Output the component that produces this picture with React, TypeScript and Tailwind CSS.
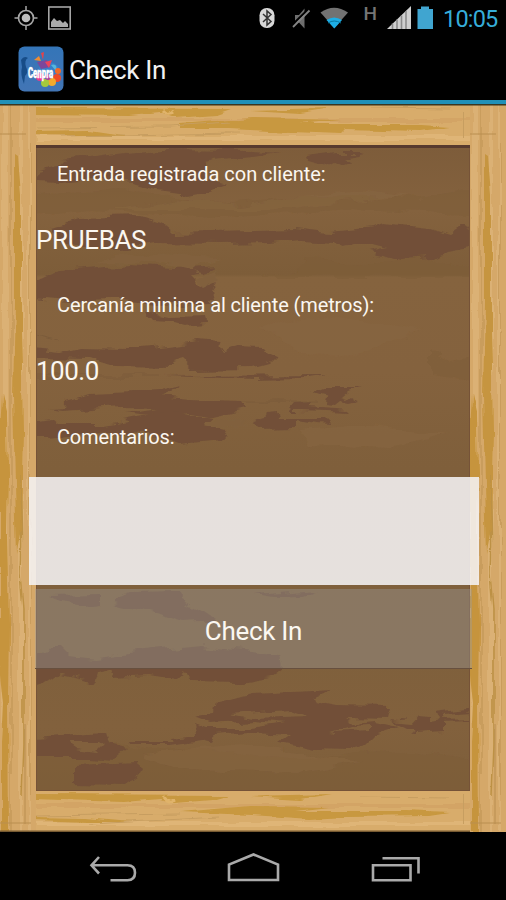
const GRAIN = [
  "M57 166L62 160 95 156 125 152 160 149 253 150 280 152 250 156 215 160 205 166 206 178 226 183 208 190 185 194 158 190 135 183 90 178 60 181 36 180 40 170Z",
  "M308 157L335 153 362 153 344 157 353 162 345 165 335 161 325 166 310 162Z",
  "M50 227L80 218 140 216 160 222 172 232 253 230 295 229 330 233 375 228 385 224 400 226 430 229 450 235 462 227 474 232 474 246 445 251 432 258 400 260 385 255 370 252 390 248 370 243 340 248 335 242 300 240 270 243 220 244 155 243 120 249 80 248 60 242Z",
  "M32 284L60 271 130 265 175 268 212 264 205 272 190 276 200 286 218 281 210 291 212 301 160 304 110 299 70 301 32 298Z",
  "M145 312L170 317 205 316 206 323 186 325 170 321 152 320Z",
  "M32 350L60 353 80 348 130 349 170 345 195 341 218 343 224 352 240 346 262 347 267 353 277 357 270 364 255 368 190 369 180 360 170 363 173 367 115 366 90 358 32 357Z",
  "M48 409L64 408 65 400 90 393 160 390 182 385 172 392 160 397 190 400 240 402 245 410 215 417 190 413 150 416 125 413 158 408 120 407 62 411Z",
  "M32 420L50 417 58 424 105 424 155 415 175 412 215 418 205 425 228 430 220 440 180 444 165 435 110 432 50 438 32 438Z",
  "M165 376L328 375 310 378 253 379Z",
  "M312 392L325 387 363 387 348 391 340 398 346 400 351 396 359 401 350 403 340 401 335 405 325 404 326 396Z",
  "M287 410L293 403 309 402 307 406 350 409 353 412 300 410Z",
  "M253 422L265 419 267 412 278 411 279 417 325 417 332 424 316 423 296 420 296 427 258 428Z",
  "M50 595L100 594 100 603 85 605 60 601Z",
  "M115 600L132 593 180 592 185 602 200 610 215 620 185 622 160 614 115 603Z",
  "M253 594L317 589 300 596 270 597Z",
  "M32 655L60 645 70 655 100 658 150 650 200 645 225 648 280 655 282 668 270 677 240 682 190 681 185 672 176 680 150 676 113 678 110 671 97 675 95 683 60 675 42 687 32 690Z",
  "M32 738L105 733 108 745 128 749 115 760 75 757 32 757Z",
  "M75 765L140 762 142 773 128 783 75 782Z",
  "M130 741L175 741 173 736 195 733 193 723 206 728 253 728 285 723 253 720 213 723 195 716 213 713 215 703 230 700 253 694 295 692 330 690 315 697 317 703 335 707 392 708 389 719 345 718 355 724 375 722 398 727 385 731 375 735 365 745 348 750 315 749 280 742 290 735 250 733 215 736 212 742 200 739 170 744 131 744Z",
  "M391 721L410 723 416 716 428 717 428 722 445 720 445 731 412 733 398 726Z",
  "M436 713L474 708 474 712 445 714 442 720 474 719 474 722 440 723Z",
];

const STREAKS = [
  "M30 108L230 109 215 114 175 117 160 112 130 115 30 114Z",
  "M180 124L253 118 340 120 300 124 405 124 450 127 420 131 345 129 340 134 290 132 230 129 180 129Z",
  "M30 131L90 130 130 136 30 135Z",
  "M30 794L230 795 212 800 175 803 160 799 125 802 30 799Z",
  "M180 812L250 806 330 807 295 811 405 811 450 813 430 816 345 817 310 819 253 815Z",
  "M30 817L85 818 130 822 90 822 30 820Z",
  "M250 110L330 108 300 113Z",
  "M250 797L330 795 300 800Z",
];

function Wood() {
  return (
    <svg viewBox="0 104 506 728" className="col-start-1 row-start-1 h-[728px] w-[506px]" aria-hidden="true">
      <defs>
        <linearGradient id="board" x1="0" y1="0" x2="0" y2="1">
          <stop offset="0" stopColor="#7d5c3a" />
          <stop offset="0.1" stopColor="#84623e" />
          <stop offset="0.2" stopColor="#7d5d39" />
          <stop offset="0.205" stopColor="#85633e" />
          <stop offset="0.35" stopColor="#84623e" />
          <stop offset="0.5" stopColor="#7f5f3b" />
          <stop offset="0.8" stopColor="#7f603c" />
          <stop offset="0.9" stopColor="#82613d" />
          <stop offset="1" stopColor="#7d5e3a" />
        </linearGradient>
        <clipPath id="inner">
          <rect x="36" y="145" width="434" height="646" />
        </clipPath>
        <clipPath id="rails">
          <path d="M36 104H470V145H36ZM36 791H470V832H36Z" />
        </clipPath>
        <clipPath id="upright">
          <rect width="36" height="728" />
        </clipPath>
        <filter id="ragged" x="0" y="104" width="506" height="728" filterUnits="userSpaceOnUse">
          <feTurbulence type="fractalNoise" baseFrequency="0.03 0.09" numOctaves="3" seed="4" result="n" />
          <feDisplacementMap in="SourceGraphic" in2="n" scale="13" xChannelSelector="R" yChannelSelector="G" />
        </filter>
        <filter id="railEdge" x="0" y="104" width="506" height="728" filterUnits="userSpaceOnUse">
          <feTurbulence type="fractalNoise" baseFrequency="0.02 0.1" numOctaves="3" seed="7" result="n" />
          <feDisplacementMap in="SourceGraphic" in2="n" scale="7" xChannelSelector="R" yChannelSelector="G" />
        </filter>
        <filter id="postEdge" x="-5" y="0" width="46" height="728" filterUnits="userSpaceOnUse">
          <feTurbulence type="fractalNoise" baseFrequency="0.12 0.02" numOctaves="3" seed="9" result="n" />
          <feDisplacementMap in="SourceGraphic" in2="n" scale="7" xChannelSelector="R" yChannelSelector="G" />
        </filter>
        <g id="post" clipPath="url(#upright)">
          <rect width="36" height="728" fill="#d5a869" />
          <g filter="url(#postEdge)">
            <path d="M2 0H8V728H2ZM19 0H23V728H19ZM28 0H30V728H28Z" fill="#dbb175" />
            <path d="M10 0H12V728H10ZM30 40H31V690H30Z" fill="#c99d5d" />
            <path d="M15 50L18 52 21 90 21 230 22 260 23 330 21 430 17 450 15 380 13 290 15 200Z" fill="#c6953f" />
            <path d="M2 290L7 312 8 370 7 430 9 520 8 600 9 728H2L2 640 4 600 0 560V330Z" fill="#c6943d" />
            <path d="M19 370Q23 430 21 470L24 505V640L22 690" fill="none" stroke="#bd9145" strokeWidth="1.5" />
          </g>
          <path d="M0 30H26M25 620V720M0 719H31" fill="none" stroke="#b98e50" />
        </g>
      </defs>
      <rect y="104" width="506" height="728" fill="#d8ac6b" />
      <g clipPath="url(#rails)">
        <g filter="url(#railEdge)">
          <path d="M36 118H470V122H36ZM36 804H470V808H36Z" fill="#d3a465" />
          <path d="M36 136H470V140H36ZM36 822H470V826H36Z" fill="#dfb577" />
          {STREAKS.map((d) => (
            <path key={d} d={d} fill="#c8983f" />
          ))}
          <path d="M163 110Q168 116 174 111M163 796Q168 804 175 799" stroke="#e0b36a" strokeWidth="3" fill="none" />
          <path d="M36 128L170 127 230 123M60 136L240 133M36 816L180 814M90 824L220 817M370 108L450 109M360 796L450 797" stroke="#c79e60" fill="none" />
        </g>
      </g>
      <path d="M463.5 112V138M463.5 794V824" stroke="#c79e60" />
      <use href="#post" y="104" />
      <use href="#post" x="470" y="104" />
      <rect x="36" y="145" width="434" height="646" fill="url(#board)" />
      <g clipPath="url(#inner)">
        <g filter="url(#ragged)">
          <path d="M30 195L120 190 220 203 310 196 420 198 474 190V214L350 209 220 218 90 211 30 216ZM295 272L305 260 370 264 420 258 474 268V277H253ZM430 350L450 362 474 358V380L430 375ZM30 740L190 750 300 760 400 750 474 760V796H30Z" fill="#7b5b38" opacity=".5" />
          <path d="M110 210L180 199 240 205 300 196 360 190 410 197 330 203 270 210ZM260 325L330 318 420 330 360 353 310 358ZM300 430L360 425 450 435 390 448 310 445ZM140 755L240 745 360 762 300 773 180 770Z" fill="#886641" opacity=".5" />
          {GRAIN.map((d) => (
            <path key={d} d={d} fill="#725038" />
          ))}
          <path d="M160 254L220 257 200 262 190 270 205 273 215 268 220 279 204 287 196 281 205 276 188 269 155 263 90 262 115 257ZM73 741L98 741 105 747 99 753 76 750ZM205 421L235 420 248 425 225 428 206 425ZM355 726L370 725 370 731 330 733ZM230 714L290 710 308 716 250 718Z" fill="#81613e" />
          <path d="M36 335L60 341M36 376H160M240 402H315" stroke="#745638" opacity=".6" fill="none" />
        </g>
      </g>
      <rect x="36" y="145" width="434" height="3" fill="#573a2e" />
      <path d="M36.5 148V791M36 790.5H470M469.5 148V791" stroke="#765338" fill="none" />
      <rect y="104" width="506" height="1.5" fill="#3b3620" />
      <rect y="830.5" width="470" height="1.5" fill="#765a32" />
    </svg>
  );
}

function Logo() {
  return (
    <svg viewBox="0 0 46 46" className="mt-px h-[46px] w-[46px] overflow-visible" role="img">
      <defs>
        <linearGradient id="tile" x1="0" y1="0" x2="0" y2="1">
          <stop stopColor="#3475b8" />
          <stop offset="1" stopColor="#4275b5" />
        </linearGradient>
      </defs>
      <rect x=".5" y=".5" width="45" height="45" rx="6" fill="url(#tile)" />
      <path d="M3 14Q6 9 10 12Q6 14 8 21Q11 26 7 30L6 38Q2 28 4 21Z" fill="#174d88" />
      <ellipse cx="31" cy="26" rx="11" ry="10" fill="#367fca" />
      <path d="M16 14L21 10 23 15Z" fill="#ef8c32" />
      <path d="M23 7L26 6 25 14Z" fill="#e64348" />
      <path d="M19 16L29 14 32 21 23 23Z" fill="#7c479b" />
      <path d="M27 16L34 14 31 22Z" fill="#ec455c" />
      <path d="M33 19Q40 17 38 25Z" fill="#55b8db" />
      <circle cx="40" cy="25" r="3" fill="#f16a28" />
      <circle cx="39" cy="32" r="4" fill="#ef4a26" />
      <circle cx="34" cy="36" r="4" fill="#f4a92a" />
      <circle cx="27" cy="37" r="4" fill="#a4c93d" />
      <circle cx="22" cy="31" r="4" fill="#e83c8b" />
      <circle cx="30" cy="31" r="3" fill="#ac3f98" />
      <text transform="translate(10 31.5) scale(.78 1.5)" fontFamily="Roboto, sans-serif" fontSize="10" fontWeight="900" fill="#fff" stroke="#fff" strokeWidth=".3">
        Cenpra
      </text>
    </svg>
  );
}

function StatusBar() {
  return (
    <header className="flex h-9 items-center justify-between">
      <svg viewBox="0 0 80 36" className="h-9 w-20" fill="none" stroke="#a5a5a5">
        <circle cx="26" cy="18" r="7.5" strokeWidth="1.7" />
        <circle cx="26" cy="18" r="4.3" fill="#bdbdbd" stroke="none" />
        <path d="M26 6V11M26 25V30M14.5 18H19M33 18H37.5" strokeWidth="1.5" />
        <rect x="48.8" y="7" width="21.4" height="22" strokeWidth="1.6" />
        <path d="M51 27V22L54 18 57 21 60 20 63 23 65 21 68 24V27Z" fill="#aaa" stroke="none" />
      </svg>
      <div className="flex">
        <svg viewBox="255 0 185 36" className="h-9 w-[185px]" fill="none">
          <rect x="259.5" y="8" width="15" height="20" rx="7.2" fill="#d8d8d8" />
          <path d="M263 14L271 21.5 267 25V11L271 14.5 263 22" stroke="#333" strokeWidth="1.5" />
          <path d="M295 15H299L304.5 8.5V28.5L299 22.5H295Z" fill="#6e6e6e" />
          <path d="M292.5 24.5L308 9.5" stroke="#000" strokeWidth="2" />
          <path d="M293 27L309.5 10.5" stroke="#858585" strokeWidth="1.8" />
          <path d="M320.5 12.5Q334 3 348 12.5L334.3 28Z" fill="#727272" />
          <path d="M326.5 20Q334 14.8 342 20L334.3 28.5Z" fill="#1eaee5" />
          <path d="M328 23Q334 19 341 23" stroke="#08779f" />
          <text x="363.5" y="19.5" fontFamily="Roboto, sans-serif" fontSize="19" fontWeight="500" fill="#757575">H</text>
          <path d="M387 29L411 6V29Z" fill="#cfcfcf" />
          <path d="M392.5 23.5V29M397 19.5V29M401.5 15.5V29M406 11V29" stroke="#8b8b8b" strokeWidth="1.6" />
          <path d="M417.5 9H421V6.5H429V9H433V29H417.5Z" fill="#40a5d0" />
        </svg>
        <span className="w-[66px] pt-px pl-[3px] text-[23.5px] leading-9 tracking-[-0.8px] text-[#36add9]">10:05</span>
      </div>
    </header>
  );
}

function NavBar() {
  return (
    <nav className="h-[68px] bg-black">
      <svg viewBox="0 832 506 68" className="h-[68px] w-[506px]" fill="none" stroke="#aaa" strokeWidth="2.6">
        <path d="M99 857L91.5 865.3 99 873.5M92 865.3H127.5Q135 865.3 135 872.7T127.5 880.2H110.5" />
        <path d="M229 880V864.5L253.5 854.5 278 864.5V880Z" />
        <path d="M373 865.3H410.5V880.2H373ZM382.5 858.3H418.5V873.5" />
      </svg>
    </nav>
  );
}

export default function App() {
  return (
    <div className="flex h-[900px] w-[506px] flex-col overflow-hidden bg-black font-[Roboto,sans-serif] text-white">
      <StatusBar />
      <div className="flex h-[68px] items-start border-b-4 border-[#2090b8] pt-[9px] pl-[18px]">
        <Logo />
        <h1 className="pl-[5px] text-[26px] leading-[51px] font-normal tracking-[-0.35px] text-[#f1f1f1]">Check In</h1>
      </div>
      <main className="grid h-[728px]">
        <Wood />
        <div className="z-10 col-start-1 row-start-1 flex flex-col pt-[54px] text-[#fbf7f1]">
          <p className="h-[66px] pl-[57px] text-[20px] leading-8 tracking-[-0.03px]">Entrada registrada con cliente:</p>
          <p className="h-[65px] pl-9 text-[26px] leading-8 tracking-[-0.35px]">PRUEBAS</p>
          <p className="h-[66px] pl-[57px] text-[20px] leading-8 tracking-[-0.12px]">Cercanía minima al cliente (metros):</p>
          <p className="h-[66px] pl-9 text-[26px] leading-8 tracking-[-0.5px]">100.0</p>
          <p className="h-14 pl-[57px] text-[20px] leading-8 tracking-[-0.15px]">Comentarios:</p>
          <textarea aria-label="Comentarios" className="ml-[29px] block h-[108px] w-[450px] resize-none bg-[#f5f3f4]/88 outline-none" />
          <button className="mt-1 ml-[35px] h-20 w-[437px] border-b border-[#67503f] bg-[#9a9a9a]/40 pt-1.5 text-[26px] tracking-[-0.3px]">Check In</button>
        </div>
      </main>
      <NavBar />
    </div>
  );
}
